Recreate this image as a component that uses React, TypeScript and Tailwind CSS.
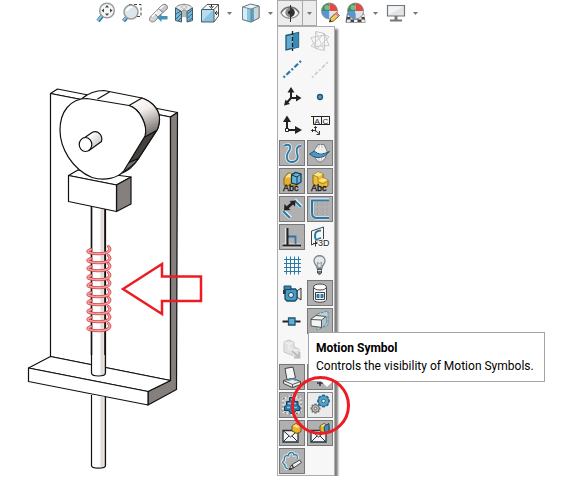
import type { ReactNode } from 'react';

const BLUE = '#2b79a5';
const DARK = '#26323a';

function Icon({ children }: { children: ReactNode }) {
  return (
    <svg viewBox="0 0 24 24" className="block size-6 shrink-0" fill="none" aria-hidden="true">
      {children}
    </svg>
  );
}

/* ---------- toolbar icons ---------- */

const ZoomFit = (
  <Icon>
    <path d="M8.5 14.5 4 20" stroke="#2d6f99" strokeWidth="4" />
    <path d="M8 14.5 3.8 19.5" stroke="#8cc3e0" strokeWidth="2" />
    <circle cx="13" cy="9.500" r="7.300" fill="#f4f5f5" stroke="#9a9c9d" strokeWidth="1.500" />
    <path d="m13 4 2 2.500h-4zM13 15l2-2.500h-4zM7.500 9.500l2.500-2v4zM18.500 9.500l-2.500-2v4z" fill="#444" />
  </Icon>
);
const ZoomArea = (
  <Icon>
    <path d="M9 3.500h12v12h-4" stroke="#444" strokeDasharray="3 2" />
    <path d="M7.500 15.500 3.500 20" stroke="#2d6f99" strokeWidth="4" />
    <path d="M7 15.500 3.300 19.500" stroke="#8cc3e0" strokeWidth="2" />
    <circle cx="11" cy="11" r="7" fill="#dbe7eb" stroke="#9a9c9d" strokeWidth="1.500" />
    <path d="M7 10c1-3 3-4 5-4" stroke="#fff" strokeWidth="2" />
  </Icon>
);
const PreviousView = (
  <Icon>
    <path d="m4 16.500 4-4.500 4.500 4-4 4.500c-3 1.500-6.500-1-4.500-4Z" fill="#d4d4d4" stroke="#808080" />
    <path d="m8 12 5-4.500 4 4-5 4.500Z" fill="#ececec" stroke="#808080" />
    <path d="m12.500 7.500 4.500-4c3-1 5.500 1.500 4 4.500l-4 3.500Z" fill="#c8c8c8" stroke="#808080" />
    <path d="m6 15.500 5-5m2.500-2.500 4.500-3.500" stroke="#fff" strokeWidth="1.500" />
    <path d="m11 16.500 4.500-4v2.500h6v3.500h-6V21Z" fill="#4590b6" />
  </Icon>
);
const SectionView = (
  <Icon>
    <path d="M9.500 10.500c1-2 4.500-2 5.500 0V17c-2-1.500-4-1.500-5.500 0Z" fill="#b6b8b9" />
    <path d="M3.500 7c3-5 14-5 17 0L15 10.500c-1-2-4.500-2-5.500 0Z" fill="#e6e7e7" stroke="#888" />
    <path d="M3.500 7v12.500l6 1.500V10.500Zm17 0v12.500l-5.500 1.500V10.500Z" fill="#79b6d3" stroke="#3c5d6e" />
    <path d="m4 13 5-3m-5 8 5-5m-3 7 3-3m6.500-4 4.500-4m-4.500 8 4.500-4m-3.500 7 3.500-3" stroke="#27516a" strokeWidth=".8" />
    <ellipse cx="12" cy="6" rx="3" ry="1.200" fill="#fff" stroke="#999" strokeWidth=".7" />
  </Icon>
);
const Orientation = (
  <Icon>
    <path d="M4 8.500 9 3.500h11.500V15l-4.500 6M20.500 3.500 16 8.500" fill="#f8f8f8" stroke="#555" />
    <path d="M3.500 8.500H16V21H3.500Z" fill="#8fc2dc" stroke="#3a6177" />
    <path d="M4 9h11L4 20Z" fill="#b9dcec" />
    <path d="M13.500 3v3m-2-1 2 2.500 2-2.500M21 12h-3m1-2-2 2 2 2" stroke="#333" />
  </Icon>
);
const DisplayStyle = (
  <Icon>
    <path d="m3.500 6 8-3 8.500 2v12l-8 4-8.500-2.500Z" fill="#eef1f2" stroke="#5f7784" />
    <path d="m3.500 6 8.500 2v13l-8.500-2.500Z" fill="#d6edf6" />
    <path d="m8 7 4 1v13l-4-1Z" fill="#8cc6de" />
    <path d="m12 8 8-3v12l-8 4Z" fill="#5ba5c6" />
    <path d="m15 7 5-2v12l-5 2.500Z" fill="#d1d5d7" />
    <path d="m3.500 6 8.500 2 8-3M12 8v13M3.500 6v12.500l8.500 2.500 8-4V5" stroke="#5f7784" strokeWidth=".8" />
  </Icon>
);
const Eye = (
  <Icon>
    <path d="M3 12c4-7.500 14-7.500 18 0-4 7-14 7-18 0Z" fill="#f7f7f7" stroke="#8f8f8f" strokeWidth="1.300" />
    <path d="M3 11.500c4-7.500 14-7.500 18 0" stroke="#707070" strokeWidth="1.500" />
    <circle cx="12" cy="11.500" r="4.700" fill="#8a8a8a" />
    <path d="M12 6.800a4.700 4.700 0 0 1 0 9.400Z" fill="#333" />
    <circle cx="12" cy="11.500" r="2" fill="#222" />
    <path d="M12.500 4v17" stroke="#333" />
  </Icon>
);
const Ball = () => (
  <>
    <path d="M11.500 10V2a8 8 0 0 0-8 8Z" fill="#3c9250" />
    <path d="M11.500 10V2a8 8 0 0 1 8 8Z" fill="#e44a43" />
    <path d="M11.500 10v8a8 8 0 0 1-8-8Z" fill="#5596da" />
    <path d="M11.500 10v8a8 8 0 0 0 8-8Z" fill="#dfe3e7" />
    <circle cx="11.500" cy="10" r="8" stroke="#888" strokeWidth=".8" />
    <circle cx="9" cy="6.500" r="2.500" fill="#fff" opacity=".35" />
  </>
);
const Appearance = (
  <Icon>
    <Ball />
    <path d="m11.500 21 1-4 6-5.500 3 3-6 5.500Z" fill="#f2c75c" stroke="#745528" />
    <path d="m17 13 1.500-1.500 3 3L20 16Z" fill="#e98983" />
    <path d="m11.500 21 .6-2.300 1.600 1.600Z" fill="#222" />
  </Icon>
);
const Scene = (
  <Icon>
    <path d="M3 12.500h17l1.500 9h-20Z" fill="#444" />
    <path d="M3.500 13.500h3V16h-3ZM6.500 16h3v2.500h-3Zm8 0h3v2.500h-3Zm3-2.500h2.500l.5 2.500h-3ZM3 18.500h3.500V21H2.500Zm7 0h3.500V21H10Zm7.500 0h3l.5 2.500h-3.500Z" fill="#eee" />
    <Ball />
  </Icon>
);
const Monitor = (
  <Icon>
    <path d="M10.500 15h3v4h-3Z" fill="#777" />
    <path d="M6 18.500h12v2H6Z" fill="#777" />
    <path d="M3.500 4.500h17V15h-17Z" fill="#e2e5e7" stroke="#777" strokeWidth="1.200" />
    <path d="M4.500 14V5.500H19Z" fill="#f3f4f5" />
  </Icon>
);

/* ---------- palette icons ---------- */

const AbcText = () => (
  <text x="3" y="21.500" fontSize="9" fill="#111" stroke="#111" strokeWidth=".3" fontFamily="Liberation Sans, sans-serif">
    Abc
  </text>
);

const Planes = (
  <Icon>
    <path d="m6 6.500 12.500-3v14.500L6 21Z" fill="#63abcf" stroke="#1f5672" strokeWidth="1.300" />
    <path d="m13 5 5.500-1.500v14.500l-5.500 1.500Z" fill="#3c8ab2" />
    <path d="M12.500 2v20" stroke="#10232e" strokeDasharray="4 2" strokeWidth="1.300" />
  </Icon>
);
const LivePlanes = (
  <Icon>
    <path d="M7.500 2.500v17l9 2v-17ZM3 8.500l14-2.500 4 10.500-14 1ZM3 17 16 5l5 3L9 19.500Z" stroke="#c9c9c9" />
    <path d="m7.500 2.500 9 19" stroke="#d5d5d5" />
  </Icon>
);
const Axes = (
  <Icon>
    <path d="M3.500 20.500 21 4" stroke={BLUE} strokeWidth="2.200" strokeDasharray="2 2 5 2" />
  </Icon>
);
const TempAxes = (
  <Icon>
    <path d="M4 20.500 20.500 4.500" stroke="#cdcdcd" strokeWidth="1.800" strokeDasharray="2 2 4 2" />
  </Icon>
);
const Coordinates = (
  <Icon>
    <path d="M11 13V6m0 7h7m-7 0-4 4.500" stroke="#222" strokeWidth="2" />
    <path d="m11 2 3.500 5.500h-7ZM21.500 13 16 9.500v7ZM4 20.500l1.500-6 4.500 4.500Z" fill="#222" />
  </Icon>
);
const Points = (
  <Icon>
    <circle cx="12" cy="12" r="2.500" fill="#559bc0" stroke="#1f5672" strokeWidth="1.300" />
  </Icon>
);
const Origins = (
  <Icon>
    <path d="M7 15V8m2 9h7" stroke="#222" strokeWidth="2" />
    <path d="m7 2.500 4 6.500H3ZM22 17l-7-4v8Z" fill="#222" />
    <path d="M5.500 15.500h3v3h-3Z" fill="#fff" stroke="#222" />
  </Icon>
);
const ReferencePoints = (
  <Icon>
    <path d="M3 3.500h18.500v8H5.500v-8m8 0v8m8-8v8" stroke="#222" />
    <text x="6.500" y="10.500" fontSize="8" fill="#222" fontFamily="Liberation Sans, sans-serif">A</text>
    <text x="14.500" y="10.500" fontSize="8" fill="#222" fontFamily="Liberation Sans, sans-serif">C</text>
    <path d="M7.500 18.500v-5M8 17.500H3.500m4 0 4 3.500M6 15l1.500-1.500L9 15M5 16l-1.500 1.500L5 19m6.500-1v3.500H8.500" stroke="#333" />
  </Icon>
);
const Curves = (
  <Icon>
    <path d="M4 5c5-3 8 0 5 5-4 6-2 11 3 11s7-4 5-9c-1-4 0-7 4-7" stroke="#eee" strokeWidth="3.500" />
    <path d="M4 5c5-3 8 0 5 5-4 6-2 11 3 11s7-4 5-9c-1-4 0-7 4-7" stroke={BLUE} strokeWidth="1.800" />
  </Icon>
);
const PartingLines = (
  <Icon>
    <path d="m6 10 4-6.500h6l3 6.500-1.500 7-4 4h-3L7 17Z" fill="#eee" stroke="#777" />
    <path d="M12 3.500c-2.500 5-2 13 0 17.500 3-5 3-13 1-17.500Z" fill="#fff" stroke="#aaa" strokeWidth=".7" />
    <path d="m1.500 13 5-3c4 4 8 3.500 15 .5l-5 4.500c-5 2.500-10 2-15-2Z" fill="#4c9bc2" stroke="#1f5672" />
    <path d="M7 10c4 3 7 3 11.500 1l-1-3.500h-10Z" fill="#eee" />
  </Icon>
);
const AnnotationsA = (
  <Icon>
    <path d="m4 9 4-5 7 1 4 8-3 4-12-1Z" fill="#e5b02f" stroke="#8f6912" />
    <path d="m5 8.500 4-4 4 .5-2 3.500Z" fill="#ffe58a" />
    <path d="m11.500 6 4-2.500L21 5v8l-4 2.500-5.500-1.500Z" fill="#65b4db" stroke="#123a50" strokeWidth="1.200" />
    <path d="m11.500 6 5.500 2 4-3M17 8v7" stroke="#123a50" />
    <AbcText />
  </Icon>
);
const AnnotationsB = (
  <Icon>
    <path d="m5 6 5-3 5 2v4l5 2v6l-5 2-10-4Z" fill="#edbe3c" stroke="#8f6912" />
    <path d="m5 6 5-3 5 2-5 3Zm5 6 5-3 5 2-5 2Z" fill="#ffe58a" />
    <path d="m5 6 5 2v5l5 2 5-3" stroke="#a77915" strokeWidth=".8" />
    <AbcText />
  </Icon>
);
const Dimensions = (
  <Icon>
    <path d="m14.500 3 7 7M3 13.500l7.500 7.500" stroke="#e3edf2" strokeWidth="4" />
    <path d="m14.500 3.500 6.500 6.500M3 14l7 7" stroke={BLUE} strokeWidth="2" />
    <path d="m7.500 10.500 5-4.500" stroke="#222" strokeWidth="3" />
    <path d="m15.500 3.500-.5 6L9.500 4ZM4 13.500l.5-6.500 6 6Z" fill="#222" />
  </Icon>
);
const Sketches = (
  <Icon>
    <path d="M9.500 5v14m5-14v14m5-14v14M6 7.500h15M6 12.500h15M6 16.500h15" stroke="#a0a0a0" strokeDasharray="1 2" />
    <path d="M21 3H4v13q0 5 5 5h12" stroke="#dfe7ea" strokeWidth="3.500" />
    <path d="M21 3.500H4v12.500q0 5 5 5h12" stroke={BLUE} strokeWidth="2" />
  </Icon>
);
const Relations = (
  <Icon>
    <path d="M7 3v17.500M2.500 20.500h18" stroke="#e6e6e6" strokeWidth="4" />
    <path d="M8 11.500h7.500V19" stroke={BLUE} strokeWidth="1.800" />
    <path d="M7.500 3v17M2.500 20.500h18.500" stroke="#222" strokeWidth="2.200" />
  </Icon>
);
const Sketch3D = (
  <Icon>
    <path d="m3.500 6 12-4v12l-12 6Z" fill="#f8f8f8" stroke="#444" />
    <path d="M13 5.500c-4 0-6 2-6 5s1 5 3 4l3-1.500" stroke={BLUE} strokeWidth="2" />
    <path d="M7.500 15.500v6m-2.500-3h5" stroke="#333" />
    <text x="10" y="21" fontSize="9" fill="#222" stroke="#fff" strokeWidth="2" paintOrder="stroke" fontFamily="Liberation Sans, sans-serif">3D</text>
  </Icon>
);
const Grid = (
  <Icon>
    <path d="M6.500 3.500v18m4-18v18m4-18v18m4-18v18M4 6.500h17m-17 4h17m-17 4h17m-17 4h17" stroke={BLUE} />
  </Icon>
);
const Light = (
  <Icon>
    <path d="M9 15c0-3-3-4-3-7 0-7 11-7 11 0 0 3-3 4-3 7Z" fill="#e2e9ec" stroke="#7c8588" strokeWidth="1.300" />
    <path d="M10 14 9.500 9l2 2 2-2-.5 5" stroke="#999" />
    <path d="M9.500 16h4v4l-2 1.500-2-1.500Z" fill="#777" stroke="#444" />
    <path d="M9.500 17.500h4" stroke="#ddd" />
  </Icon>
);
const Camera = (
  <Icon>
    <path d="m17 10 4-3v12l-4-3Z" fill="#e8e8e8" stroke="#333" />
    <path d="M5 8h10.500l1.500 2v8l-2 2H7l-2-2Z" fill="#4a9bc4" stroke="#174c67" strokeWidth="1.300" />
    <path d="M4 5h7v3.500H4Z" fill="#3988af" stroke="#174c67" />
    <circle cx="11" cy="14" r="2.500" fill="#d8edf7" stroke="#174c67" />
    <path d="M3 9h2.500v4H3Z" fill="#333" />
  </Icon>
);
const Decals = (
  <Icon>
    <path d="M5.500 6v13c2 3 11 3 13 0V6Z" fill="#f3f3f3" stroke="#4b4b4b" />
    <ellipse cx="12" cy="6" rx="6.500" ry="3" fill="#fff" stroke="#4b4b4b" />
    <path d="M7.500 11.500h9v7h-9Z" fill="#fff" stroke="#444" />
    <path d="M8.500 13h3v4h-3Zm4 0h3v4h-3Z" fill={BLUE} />
  </Icon>
);
const RouteConnection = (
  <Icon>
    <path d="M2.500 12.500h18" stroke="#222" strokeWidth="2" />
    <path d="M8.500 9h6.500v7H8.500Z" fill="#65acd0" stroke="#1f5672" strokeWidth="1.300" />
  </Icon>
);
const Bodies = (
  <Icon>
    <path d="m9 5 11-3v14L9 21Z" fill="#bcd3dd" stroke="#5c8ba2" strokeDasharray="3 1" />
    <path d="m3 10 5-3.500 10 1v7l-4 4-11-1.500Z" fill="#f4f4f4" stroke="#555" />
    <path d="m13.500 11 4.500-3.500v7l-4 4Z" fill="#a9c5d2" />
    <path d="m3 10.500 10.500.5L18 7.500M13.500 11v7.500" stroke="#555" />
  </Icon>
);
const DisabledPart = (
  <Icon>
    <path d="m4 5 5-2 5 2v5l5 2v5l-5 2-10-4Z" fill="#e2e2e2" stroke="#c5c5c5" />
    <path d="m4 5 5 2 5-2M9 7v5l5 2 5-2M14 14v5" stroke="#f5f5f5" />
    <path d="m12 14 7 6m.5-5v5.500H14" stroke="#bbb" strokeWidth="1.800" />
  </Icon>
);
const WeldBead = (
  <Icon>
    <path d="m5 3.500 8-1.500 2.500 11L7 14.500Z" fill="#f5f5f5" stroke="#444" />
    <path d="m3.500 15.500 9-2 8 3v3l-8 3-9-4Z" fill="#eee" stroke="#444" />
    <path d="m3.500 15.500 9 4 8-3M12.500 19.500v3" stroke="#555" />
    <path d="m7.500 15.500 5-1.500 4 1.500" stroke="#5a9cba" strokeWidth="1.500" />
  </Icon>
);
const CenterOfMass = (
  <Icon>
    <path d="M12 4v17m-3-3h6" stroke="#333" strokeWidth="1.500" />
  </Icon>
);
const Cosmetic = (
  <Icon>
    <path d="m3 6 9-4 9 4v13l-9 3-9-3Z" fill="#c6c6c6" stroke="#eee" strokeWidth="1.500" />
    <path d="m3 6 9-4 9 4v13l-9 3-9-3Z" stroke="#555" strokeDasharray="2 2" />
    <path d="M9.500 4.500h5v4H18v4l2 1v4h-4l-2 3h-3.500l-2-3h-4v-4l2-1v-4h3Z" fill={BLUE} stroke="#153e54" />
    <path d="M8 10.500h3m2 0h3M7 14.500h3m4 0h3m-6-8h2" stroke="#8cc6e0" strokeWidth="1.300" />
  </Icon>
);

function Gear({ cx, cy, r, fill, edge }: { cx: number; cy: number; r: number; fill: string; edge: string }) {
  return (
    <g transform={`translate(${cx} ${cy})`}>
      {[0, 45, 90, 135].map((a) => (
        <path key={a} d={`M0 ${-r - 1.2}V${r + 1.2}`} transform={`rotate(${a})`} stroke={edge} strokeWidth={r * 0.55} />
      ))}
      <circle r={r} fill={fill} stroke={edge} />
      <circle r={r * 0.35} fill="#e9f1f4" stroke={edge} />
    </g>
  );
}
const MotionSymbol = (
  <Icon>
    <Gear cx={15.5} cy={8} r={5.2} fill="#56a2c9" edge="#22688c" />
    <Gear cx={7.5} cy={15.5} r={3.8} fill="#b8b8b8" edge="#6c6c6c" />
  </Icon>
);
const Envelope = ({ blue = false }: { blue?: boolean }) => (
  <Icon>
    <path d="M3 9.500h15v11.500H3Z" fill="#f4f4f4" stroke={DARK} strokeWidth="1.300" />
    <path d="m3 9.500 7.500 6.500L18 9.500M3 21l6-6m9 6-6-6" stroke={DARK} />
    <path d="m12 5 4-2.500 5 3v5l-4 2-5-2.500Z" fill="#e8b332" stroke="#74530b" />
    <path d="m12.500 5 3.500-2 4 2.500-3 1.500Z" fill="#ffe17b" />
    {blue && <path d="m16 5.500 5-3v8l-4 2Z" fill="#4290b9" stroke="#164a64" />}
  </Icon>
);
const Markup = (
  <Icon>
    <path d="M8 20c-2-1-4-2-3-4-3-2-3-4-.5-5-1-3 1-5 3.500-4 1-4 5-5 6-1 3-1 4 1 3 4" stroke="#e5eef2" strokeWidth="3" />
    <path d="M8 20c-2-1-4-2-3-4-3-2-3-4-.5-5-1-3 1-5 3.500-4 1-4 5-5 6-1 3-1 4 1 3 4" stroke="#37799b" strokeWidth="1.300" />
    <path d="m9 20.500 2.500-4.500 8-5 2 2.500-8 5.500Z" fill="#eee" stroke="#444" />
    <path d="m12 16 1.500 3M9 20.500l3-1" stroke="#333" strokeWidth="1.500" />
  </Icon>
);

type Cell = { name: string; icon: ReactNode; on?: boolean; hot?: boolean };

const cells: Cell[] = [
  { name: 'Planes', icon: Planes },
  { name: 'Live Planes', icon: LivePlanes },
  { name: 'Axes', icon: Axes },
  { name: 'Temporary Axes', icon: TempAxes },
  { name: 'Coordinate Systems', icon: Coordinates },
  { name: 'Points', icon: Points },
  { name: 'Origins', icon: Origins },
  { name: 'Reference Labels', icon: ReferencePoints },
  { name: 'Curves', icon: Curves, on: true },
  { name: 'Parting Lines', icon: PartingLines, on: true },
  { name: 'All Annotations', icon: AnnotationsA, on: true },
  { name: 'Top Level Annotations', icon: AnnotationsB, on: true },
  { name: 'Dimension Names', icon: Dimensions, on: true },
  { name: 'Sketches', icon: Sketches, on: true },
  { name: 'Sketch Relations', icon: Relations, on: true },
  { name: '3D Sketch Planes', icon: Sketch3D },
  { name: 'Grid', icon: Grid },
  { name: 'Lights', icon: Light },
  { name: 'Cameras', icon: Camera },
  { name: 'Decals', icon: Decals, on: true },
  { name: 'Route Points', icon: RouteConnection },
  { name: 'Bounding Box', icon: Bodies, on: true },
  { name: 'Parts', icon: DisabledPart },
  { name: 'Simulation', icon: DisabledPart },
  { name: 'Weld Beads', icon: WeldBead, on: true },
  { name: 'Center of Mass', icon: CenterOfMass, on: true },
  { name: 'Cosmetic Threads', icon: Cosmetic, on: true },
  { name: 'Motion Symbol', icon: MotionSymbol, hot: true },
  { name: 'Envelope', icon: <Envelope />, on: true },
  { name: 'Envelope Parts', icon: <Envelope blue />, on: true },
  { name: 'Markups', icon: Markup, on: true },
];

function Tool({ name, icon, className = '' }: { name: string; icon: ReactNode; className?: string }) {
  return (
    <button type="button" aria-label={name} className={`flex w-[26px] shrink-0 items-center justify-center ${className}`}>
      {icon}
    </button>
  );
}

function Caret({ name, className = 'w-3' }: { name: string; className?: string }) {
  return (
    <button type="button" aria-label={name} className={`flex shrink-0 items-center justify-center ${className}`}>
      <svg viewBox="0 0 5 3" className="h-[3px] w-[5px]" aria-hidden="true">
        <path d="M0 0h5L2.500 3Z" fill="#777" />
      </svg>
    </button>
  );
}

function Palette() {
  return (
    <div className="relative grid shrink-0 grid-cols-[26px_26px] gap-0.5 self-start border border-[#adadad] bg-[#f7f7f7] p-px shadow-[3px_3px_2px_rgba(0,0,0,0.5)]">
      {cells.map((c) => (
        <button
          key={c.name}
          type="button"
          aria-label={c.name}
          aria-pressed={!!c.on}
          className={`flex size-[26px] items-center justify-center border ${
            c.hot ? 'border-[#8a8a8a] bg-[#ebebeb]' : c.on ? 'border-[#777777] bg-[#b0b0b0]' : 'border-transparent'
          }`}
        >
          {c.icon}
        </button>
      ))}
      <div role="tooltip" className="absolute top-[305px] left-[30px] border border-[#a5a5a8] bg-white py-1.5 pr-2.5 pl-[7px] font-[Roboto,'Noto_Sans',sans-serif] text-[12px] leading-[18px] whitespace-nowrap text-black">
        <div className="font-bold">Motion Symbol</div>
        <div>Controls the visibility of Motion Symbols.</div>
        <svg viewBox="0 0 12 7" className="absolute top-full left-3 h-[7px] w-3" aria-hidden="true">
          <path d="M0 0h12L6 6Z" fill="#fff" />
        </svg>
      </div>
      <div className="pointer-events-none absolute top-[349px] left-[13px] size-[59px] rounded-full border-[3px] border-[#ed1c24]" />
    </div>
  );
}

const coils = Array.from({ length: 10 }, (_, i) => {
  const y = Math.round(252 + i * 8.55);
  return `M91 ${y - 2.5}q-5 1.500-2 3 10 2.500 18 0 5-2.500 1.500-6`;
});

function Mechanism() {
  return (
    <svg viewBox="20 80 190 395" className="h-[395px] w-[190px]" role="img" aria-label="Cam and spring mechanism" fill="none" stroke="#111" strokeWidth="1.200" strokeLinejoin="round">
      <defs>
        <linearGradient id="rod">
          <stop offset="0" stopColor="#fff" />
          <stop offset=".55" stopColor="#fff" />
          <stop offset=".75" stopColor="#ddd4d0" />
          <stop offset=".9" stopColor="#eee8e5" />
          <stop offset="1" stopColor="#77716e" />
        </linearGradient>
        <linearGradient id="rim" x1="0" y1="0" x2="0.3" y2="1">
          <stop offset="0" stopColor="#fff" />
          <stop offset=".4" stopColor="#f3eeeb" />
          <stop offset="1" stopColor="#77716e" />
        </linearGradient>
        <linearGradient id="pin" x1="0" y1="0" x2="1" y2="1">
          <stop offset=".3" stopColor="#fff" />
          <stop offset="1" stopColor="#b5aca7" />
        </linearGradient>
      </defs>

      {/* back plate and shelf */}
      <path d="m50.500 93.500 7-4.500 120 23.500-7 4.500Z" fill="#fff" />
      <path d="M50.500 93.500 170.500 117v263.500L50.500 356.500Z" fill="#fff" />
      <path d="m170.500 117 7-4.500-1 277-28.500 15.500v-13.500l22.500-11Z" fill="#85807d" />
      <path d="m50.500 356.500-22 11.500L148 391.500l22.500-11Z" fill="#fff" />
      <path d="M28.500 368v13.500L148 405v-13.500Z" fill="#fff" />

      {/* push rod */}
      <path d="M91.500 395v70.500c0 3.500 14 3.500 14 0V397" fill="url(#rod)" />
      <path d="M91.500 205v168c0 4 14 4 14 0V205Z" fill="url(#rod)" />
      <path d="M91.500 205v150M105 205v150" strokeWidth="1.500" />

      {/* follower block */}
      <path d="M68.500 175.500 78 170l53 7-14.500 8Z" fill="#fff" />
      <path d="m116.500 185 14.500-8v27l-14.500 7.500Z" fill="#85807d" />
      <path d="m68.500 175.500 48 9.500v26.500l-48-10Z" fill="#fff" />

      {/* cam */}
      <path d="M82 98.500c6-5 14-8 22-8l38 7.500c12 4 18 13 17.500 22-.5 6-1 8-3 11L138.500 158.500C133 167 128 171 118 175Z" fill="#fff" />
      <path d="m129 105.500 13-7.500c12 4 18 14 17.500 22-.5 6-1 8-3 11L144 138c4-14-4-29-15-32.500Z" fill="url(#rim)" />
      <path d="m144 137.500 12.500-7-18 28-10 4.500Z" fill="#45413f" />
      <path d="m128 163 10.500-4.500c-5 8-12 12-20 16Z" fill="#77716e" />
      <path d="M87 98.500l42 7c11 3.500 19 20 16 30.500L124 170.500c-6 8-20 10.500-32 7C72 169 60 148 60 130 60 112 70 98.500 87 98.500Z" fill="#fff" />
      <path d="m97.500 99 12-7" />
      <path d="m82 139.500 10-7c6-3 11 3 9.500 9L89 150.500Z" fill="url(#pin)" />
      <ellipse cx="85.500" cy="144.500" rx="6.300" ry="7" fill="#fff" />

      {/* spring */}
      {coils.map((d) => (
        <g key={d} strokeLinecap="round">
          <path d={d} stroke="#c9474b" strokeWidth="3" />
          <path d={d} stroke="#fb9c9d" strokeWidth="1.600" />
        </g>
      ))}

      <path d="M123 289 162 264v12.500h39V301h-39v13Z" stroke="#ed1c24" strokeWidth="2.500" strokeLinejoin="miter" />
    </svg>
  );
}

export default function App() {
  return (
    <div className="bg-white">
      <header className="flex h-[26px] pl-[93px]">
        <Tool name="Zoom to Fit" icon={ZoomFit} />
        <Tool name="Zoom to Area" icon={ZoomArea} />
        <Tool name="Previous View" icon={PreviousView} />
        <Tool name="Section View" icon={SectionView} />
        <Tool name="View Orientation" icon={Orientation} />
        <Caret name="View Orientation options" />
        <Tool name="Display Style" icon={DisplayStyle} className="ml-[3px]" />
        <Caret name="Display Style options" />
        <Tool name="Hide/Show Items" icon={Eye} className="ml-px border border-[#a8a8a8] bg-[#ececec]" />
        <Caret name="Hide/Show Items options" className="w-[14px] border border-l-0 border-[#a8a8a8] bg-[#ececec]" />
        <Tool name="Edit Appearance" icon={Appearance} />
        <Tool name="Apply Scene" icon={Scene} />
        <Caret name="Apply Scene options" />
        <Tool name="View Settings" icon={Monitor} className="ml-0.5" />
        <Caret name="View Settings options" />
      </header>
      <main className="flex">
        <div className="w-[277px] shrink-0 pt-[54px] pl-5">
          <Mechanism />
        </div>
        <Palette />
      </main>
    </div>
  );
}
